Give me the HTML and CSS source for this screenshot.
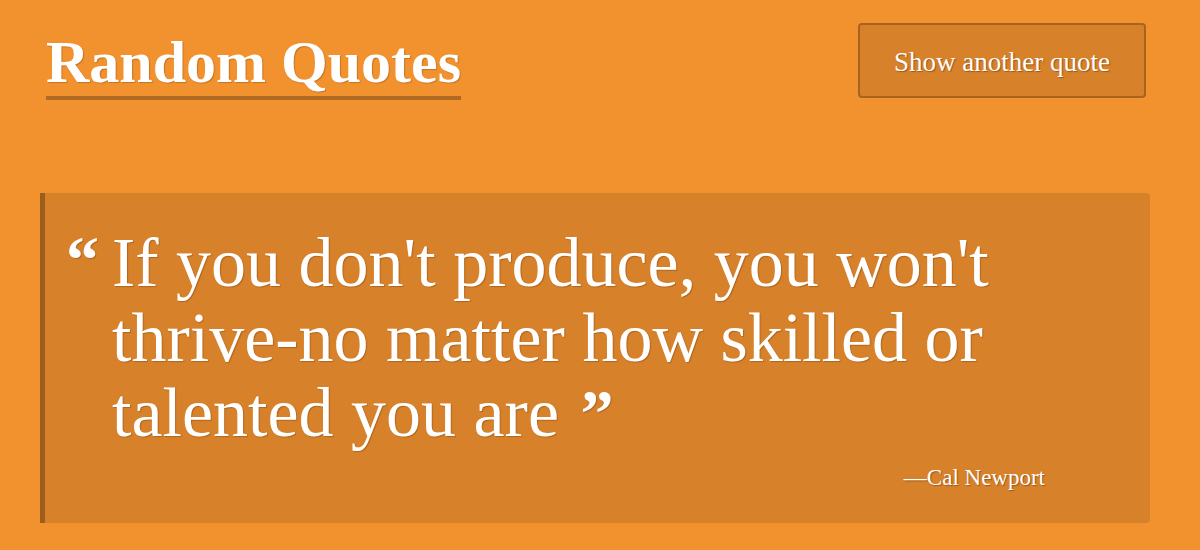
FILE: index.html
```html
<!DOCTYPE html>
<html lang="en">
<head>
<meta charset="utf-8">
<title>Random Quotes</title>
<link rel="stylesheet" href="styles.css">
</head>
<body>
<div class="page">
  <header class="top">
    <h1 class="title">Random Quotes</h1>
    <button class="next-btn" type="button">Show another quote</button>
  </header>
  <main class="card">
    <blockquote class="quote">
      <span class="mark open">&ldquo;</span>
      <p class="quote-text">If you don't produce, you won't thrive-no matter how skilled or talented you are <span class="mark close">&rdquo;</span></p>
      <footer class="author">&mdash;Cal Newport</footer>
    </blockquote>
  </main>
</div>
</body>
</html>
```

FILE: styles.css
```css
* { box-sizing: border-box; }
html, body { margin: 0; height: 100%; }
body {
  background: #f2922f;
  color: #fff;
  font-family: "Liberation Serif", "DejaVu Serif", serif;
  overflow: hidden;
}
.page {
  padding: 23px 50px 0 40px;
}
.top {
  display: flex;
  justify-content: space-between;
  align-items: flex-start;
  padding-left: 6px;
  padding-right: 4px;
}
.title {
  margin: 10px 0 0 0;
  font-size: 60px;
  font-weight: 700;
  line-height: 58px;
  padding-bottom: 5px;
  border-bottom: 4px solid #b06a24;
  text-shadow: 1px 1px 1px rgba(120, 60, 10, 0.35);
}
.next-btn {
  width: 288px;
  height: 75px;
  background: #d7822a;
  border: 2px solid #a8641f;
  border-radius: 4px;
  color: #fff;
  font-family: inherit;
  font-size: 27px;
  line-height: 1;
  padding: 3px 0 0 0;
  text-shadow: 1px 1px 1px rgba(90, 45, 5, 0.5);
}
.card {
  margin-top: 93px;
  height: 330px;
  background: #d7822a;
  border-left: 5px solid #9c5d1d;
  border-radius: 0 4px 4px 0;
  padding: 32px 105px 0 22px;
}
.quote {
  margin: 0;
  display: grid;
  grid-template-columns: 45px 1fr;
}
.quote-text {
  margin: 0;
  font-size: 70px;
  line-height: 75px;
  text-shadow: 1px 1px 1px rgba(120, 60, 10, 0.4);
}
.mark {
  font-family: "Liberation Serif", serif;
  font-weight: 700;
  font-size: 66px;
  line-height: 1;
  text-shadow: 1px 1px 1px rgba(120, 60, 10, 0.4);
}
.mark.open {
  padding-top: 2px;
  margin-left: -1px;
}
.mark.close {
  vertical-align: 1px;
  margin-left: 4px;
  line-height: 0;
}
.author {
  grid-column: 2;
  text-align: right;
  font-size: 23px;
  margin-top: 15px;
  text-shadow: 1px 1px 1px rgba(90, 45, 5, 0.5);
}
```
